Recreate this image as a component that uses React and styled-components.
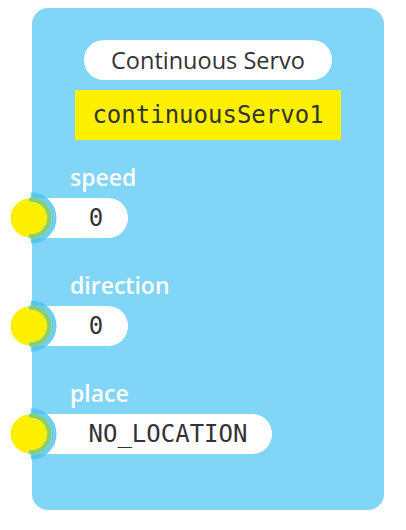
import React from 'react';
import styled, { createGlobalStyle } from 'styled-components';

const GlobalStyle = createGlobalStyle`
  body {
    margin: 0;
    background: #fff;
    font-family: "Open Sans", sans-serif;
  }
`;

const Block = styled.div`
  position: relative;
  margin: 8px 0 0 32px;
  width: 352px;
  height: 502px;
  background: #81d5f7;
  border-radius: 16px;
  display: flex;
  flex-direction: column;
  padding-top: 32px;
  box-sizing: border-box;
`;

const Header = styled.div`
  display: flex;
  flex-direction: column;
  align-items: center;
  gap: 10px;
`;

const Title = styled.div`
  width: 248px;
  height: 40px;
  border-radius: 20px;
  background: #fff;
  color: #333;
  font-size: 23.5px;
  display: flex;
  align-items: center;
  justify-content: center;
`;

const NameTag = styled.div`
  width: 266px;
  height: 50px;
  background: #ffef00;
  color: #333;
  font-family: "DejaVu Sans Mono", monospace;
  font-size: 24px;
  display: flex;
  align-items: center;
  justify-content: center;
`;

const Inputs = styled.div`
  display: flex;
  flex-direction: column;
  gap: 32px;
  margin-top: 22px;
`;

const Field = styled.div`
  display: flex;
  flex-direction: column;
  gap: 6px;
`;

const Label = styled.div`
  padding-left: 38px;
  color: #fff;
  font-weight: 600;
  font-size: 23px;
  line-height: 30px;
`;

const Slot = styled.div`
  position: relative;
  height: 40px;
`;

const Pill = styled.div`
  width: ${p => p.$width}px;
  height: 40px;
  border-radius: 0 20px 20px 0;
  background: #fff;
  color: #333;
  font-family: "DejaVu Sans Mono", monospace;
  font-size: 24px;
  display: flex;
  align-items: center;
  justify-content: center;
  padding-left: 32px;
  box-sizing: border-box;
`;

const Port = styled.svg`
  position: absolute;
  left: -32px;
  top: -8px;
`;

const Connector = () => (
  <Port width="64" height="56" viewBox="0 0 64 56">
    <circle cx="30" cy="28" r="19.5" fill="#ffef00" />
    <path d="M31 5 A23 23 0 0 1 31 51" fill="none" stroke="#4cc0f3" strokeOpacity="0.8" strokeWidth="5" />
    <path d="M31 9.5 A18.5 18.5 0 0 1 31 46.5" fill="none" stroke="#84d07a" strokeWidth="4.5" strokeLinecap="round" />
  </Port>
);

const fields = [
  { label: 'speed', value: '0', width: 96 },
  { label: 'direction', value: '0', width: 96 },
  { label: 'place', value: 'NO_LOCATION', width: 240 },
];

export default function App() {
  return (
    <>
      <GlobalStyle />
      <Block>
        <Header>
          <Title>Continuous Servo</Title>
          <NameTag>continuousServo1</NameTag>
        </Header>
        <Inputs>
          {fields.map(f => (
            <Field key={f.label}>
              <Label>{f.label}</Label>
              <Slot>
                <Pill $width={f.width}>{f.value}</Pill>
                <Connector />
              </Slot>
            </Field>
          ))}
        </Inputs>
      </Block>
    </>
  );
}
